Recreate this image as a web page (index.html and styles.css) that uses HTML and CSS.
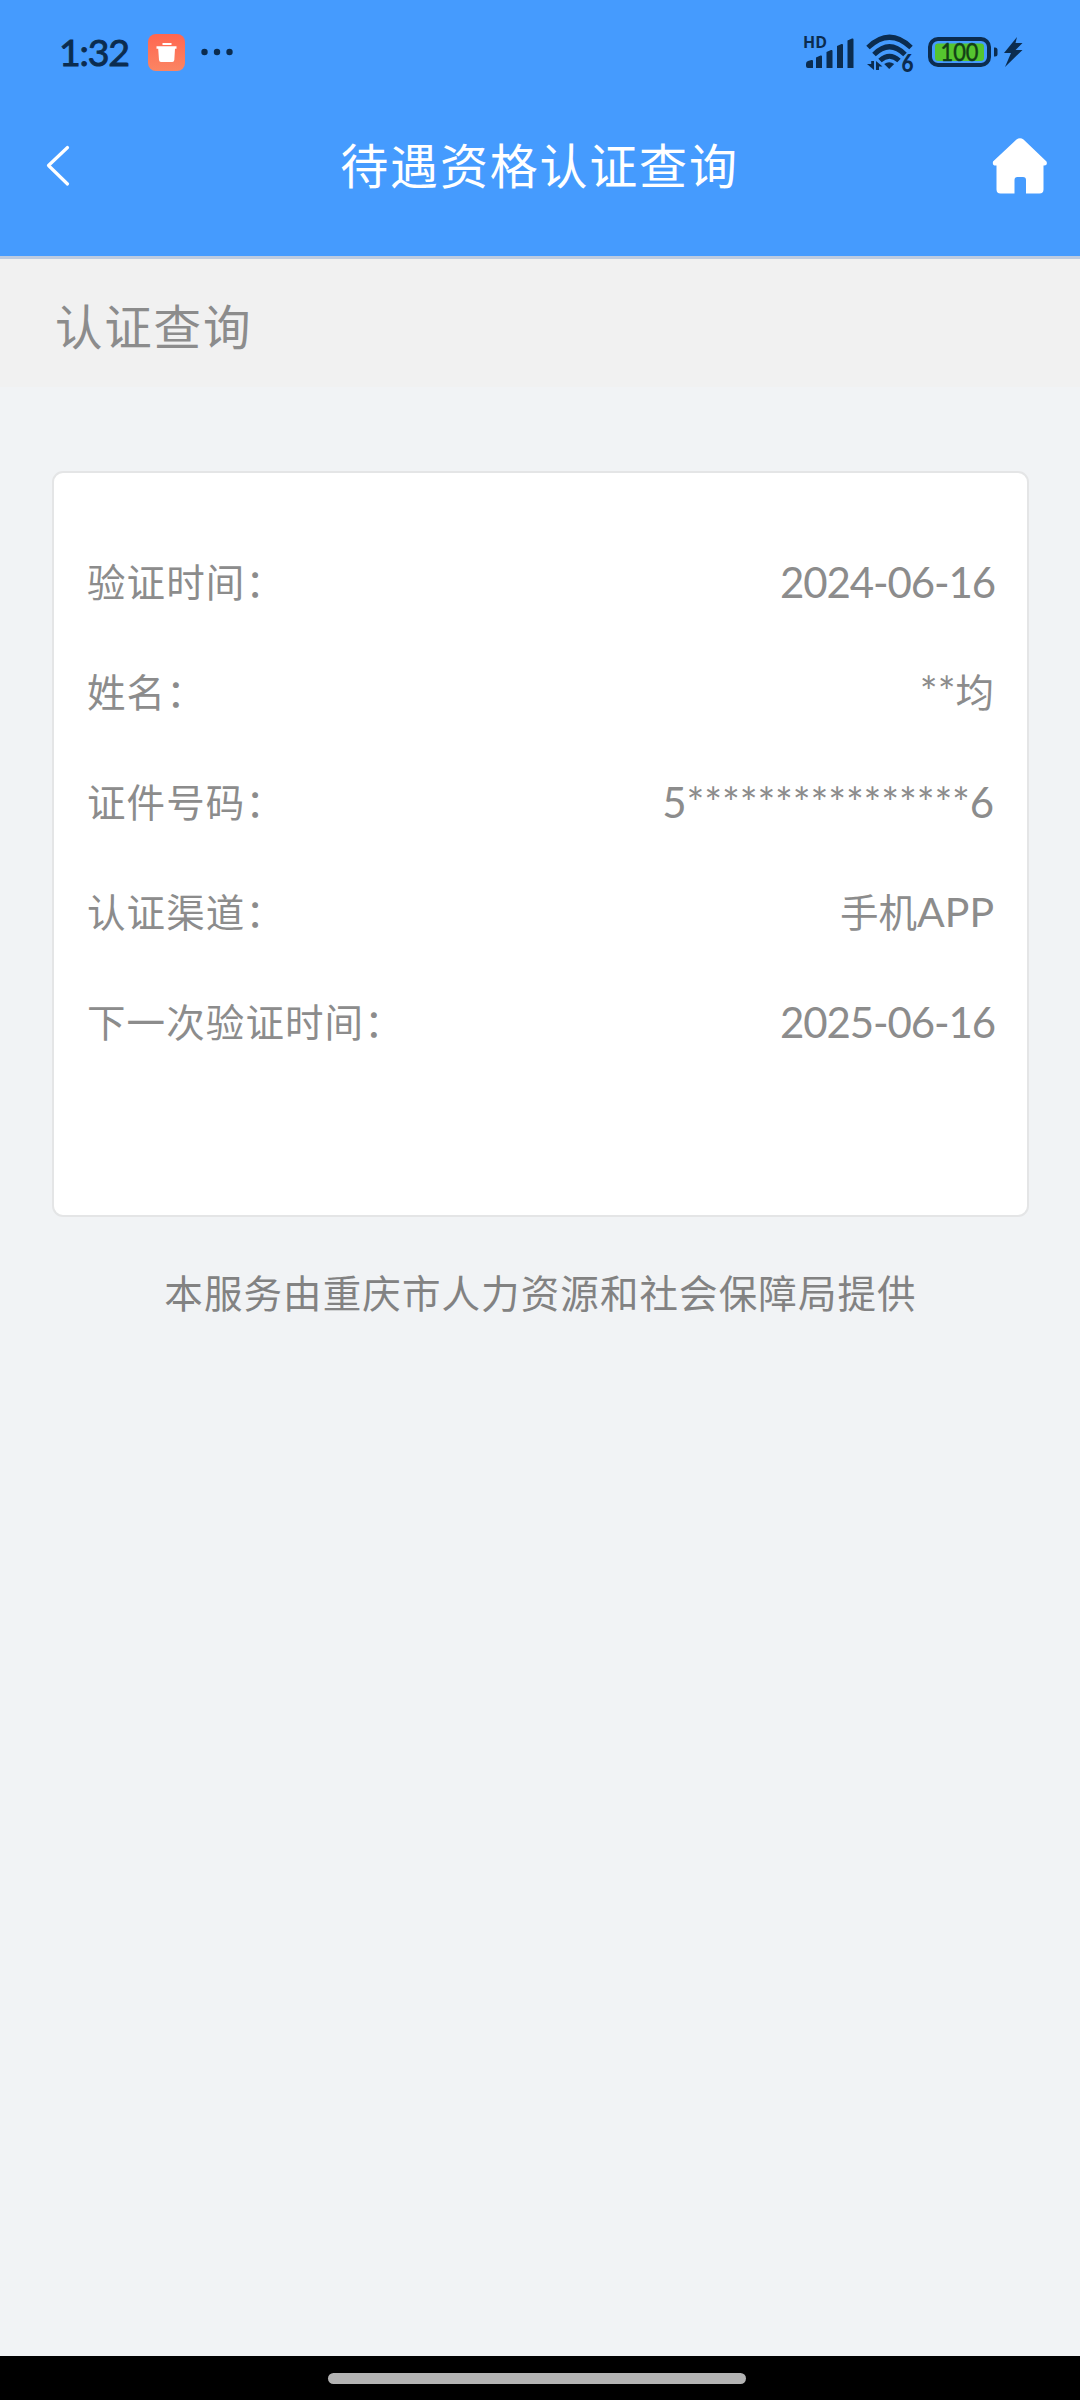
FILE: index.html
```html
<!DOCTYPE html>
<html lang="zh-CN">
<head>
<meta charset="utf-8">
<title>待遇资格认证查询</title>
<link rel="stylesheet" href="styles.css">
</head>
<body>
<div class="screen">
  <header class="top">
    <div class="status">
      <span class="time">1:32</span>
      <svg class="app-icon" width="37" height="37" viewBox="0 0 37 37">
        <defs><linearGradient id="coral" x1="0" y1="0" x2="0" y2="1"><stop offset="0" stop-color="#ff6650"/><stop offset="1" stop-color="#fb8563"/></linearGradient></defs>
        <rect width="37" height="37" rx="8" fill="url(#coral)"/>
        <path d="M14.500 9h9v2h-9zM8.500 12.200h20v2.600h-1.500L26.300 26q-.2 2-2 2H13q-1.800 0-2-2l-.8-11.200H8.500z" fill="#fff"/>
      </svg>
      <svg class="dots" width="32" height="8" viewBox="0 0 32 8" fill="#0b2c4f"><circle cx="3.500" cy="4" r="3.200"/><circle cx="16" cy="4" r="3.200"/><circle cx="28.500" cy="4" r="3.200"/></svg>
      <svg class="signals" width="234" height="56" viewBox="0 -6 234 56" fill="#0b2c4f">
        <text class="hd" x="0" y="18" textLength="24" lengthAdjust="spacingAndGlyphs">HD</text>
        <path d="M3 34q0-2.500 2-3l3.500-1q1.500-.3 1.500 1v7H5q-2 0-2-2zM13 27.500l4.500-2q1.500-.5 1.500 1V38h-6zM23.500 22l4.500-2q1.500-.5 1.500 1v17h-6zM34 16l4.500-2q1.500-.5 1.500 1v23h-6zM44.500 10.500l4.500-2q1.500-.5 1.500 1V38h-6z"/>
        <g fill="none" stroke="#0b2c4f" stroke-width="5">
          <path d="M65 17.500Q86.500 -3 108 17.500M71 24.500Q86.500 9 102 24.500M77 30.500Q86.500 22 96 30.500"/>
        </g>
        <path d="M86.200 39l-5-5q5-3.500 10 0z"/>
        <path d="M71 31v9l-7-6h4.200v-3zM73 40v-9l6.500 5.500h-3.500V40z"/>
        <text class="six" x="98.500" y="42" textLength="12" lengthAdjust="spacingAndGlyphs">6</text>
        <rect x="127" y="9" width="59" height="26" rx="8" fill="none" stroke="#0b2c4f" stroke-width="4"/>
        <rect x="132" y="13.500" width="49" height="17.500" rx="3" fill="#55c52f"/>
        <text class="charge" x="156.500" y="31" text-anchor="middle" textLength="38" lengthAdjust="spacingAndGlyphs">100</text>
        <path d="M191 17.500h1q2.500 0 2.500 2.500v4q0 2.500-2.500 2.500h-1z"/>
        <path d="M214 7l-13 16h7l-6 14L219.500 20h-7l7-7h-7z"/>
      </svg>
    </div>
    <nav class="nav">
      <svg class="back" width="26" height="42" viewBox="0 0 26 42" fill="none" stroke="#fff" stroke-width="3.200" stroke-linecap="round" stroke-linejoin="round"><path d="M22.500 2.500L3.500 20.500 22.500 39"/></svg>
      <h1 class="title">待遇资格认证查询</h1>
      <svg class="home" width="56" height="56" viewBox="0 0 56 56" fill="#fff"><path d="M24.500 1.500Q28 -1 31.500 1.500L54.500 23.500Q56 28 51.500 27.500V51.500Q51.500 55.500 47.500 55.500H34V42Q34 39 31 39H25.500Q22.500 39 22.500 42V55.500H8.500Q4.500 55.500 4.500 51.500V27.500Q0 28 1 23.500Z"/></svg>
    </nav>
  </header>
  <h2 class="section">认证查询</h2>
  <main class="content">
    <dl class="card">
      <div class="row"><dt>验证时间：</dt><dd class="date">2024-06-16</dd></div>
      <div class="row"><dt>姓名：</dt><dd class="name"><span class="stars">**</span>均</dd></div>
      <div class="row"><dt>证件号码：</dt><dd class="number">5<span class="stars">****************</span>6</dd></div>
      <div class="row"><dt>认证渠道：</dt><dd class="name">手机<span class="latin">APP</span></dd></div>
      <div class="row"><dt>下一次验证时间：</dt><dd class="date">2025-06-16</dd></div>
    </dl>
    <p class="provider">本服务由重庆市人力资源和社会保障局提供</p>
  </main>
  <footer class="gesture"><span class="pill"></span></footer>
</div>
</body>
</html>
```
FILE: styles.css
```css
* { box-sizing: border-box; margin: 0; padding: 0; }
body { background: #f1f3f5; }
.screen {
  width: 1080px;
  height: 2400px;
  display: flex;
  flex-direction: column;
  overflow: hidden;
  font-family: "Noto Sans CJK SC", sans-serif;
  color: #8c8c8c;
}
.top {
  height: 259px;
  background: #459bfe;
  border-bottom: 3px solid #bdcbe0;
}
.status {
  height: 104px;
  display: flex;
  align-items: center;
  padding: 0 43px 0 59px;
}
.time {
  width: 89px;
  font: 400 37.500px/46px Lato, sans-serif;
  letter-spacing: -1.200px;
  -webkit-text-stroke: .9px #0b2c4f;
  color: #0b2c4f;
}
.dots { margin-left: 16px; }
.signals { margin-left: auto; }
.hd { font: 700 16.500px "Open Sans", sans-serif; }
.six { font: 900 24px Lato, sans-serif; }
.charge { font: 400 25px Lato, sans-serif; fill: #123f16; stroke: #123f16; stroke-width: .5px; }
.nav {
  height: 123px;
  display: flex;
  align-items: center;
  justify-content: space-between;
  padding: 0 32px 0 45px;
}
.title {
  margin-left: 16px;
  padding-bottom: 6px;
  font-size: 48px;
  font-weight: 400;
  line-height: 72px;
  letter-spacing: 1.800px;
  color: #fff;
}
.section {
  height: 128px;
  padding-left: 55px;
  background: #f1f1f1;
  font-size: 47.500px;
  font-weight: 400;
  line-height: 131px;
  letter-spacing: 1.800px;
}
.content { flex: 1; padding: 84px 51px 0 52px; }
.card {
  height: 746px;
  padding: 54px 33px 0 33px;
  border: 2px solid #e4e5e6;
  border-radius: 11px;
  background: #fff;
}
.row {
  height: 110px;
  display: flex;
  align-items: center;
  justify-content: space-between;
  font-size: 38.500px;
  line-height: 56px;
}
.row dt { padding-bottom: 4px; letter-spacing: 1.100px; }
.name { padding-bottom: 3px; }
.date, .number, .stars, .latin { font-family: Lato, sans-serif; font-size: 42px; }
.date { margin-right: -1px; letter-spacing: -1.100px; }
.number { letter-spacing: -.15px; }
.latin { font-size: 41px; }
.provider {
  margin-top: 44px;
  font-size: 38.500px;
  line-height: 60px;
  letter-spacing: 1.100px;
  text-align: center;
  color: #828282;
}
.gesture {
  height: 44px;
  display: flex;
  align-items: center;
  justify-content: center;
  background: #000;
}
.pill { width: 418px; height: 11px; margin-left: -6px; border-radius: 6px; background: #b3b3b3; }
```
